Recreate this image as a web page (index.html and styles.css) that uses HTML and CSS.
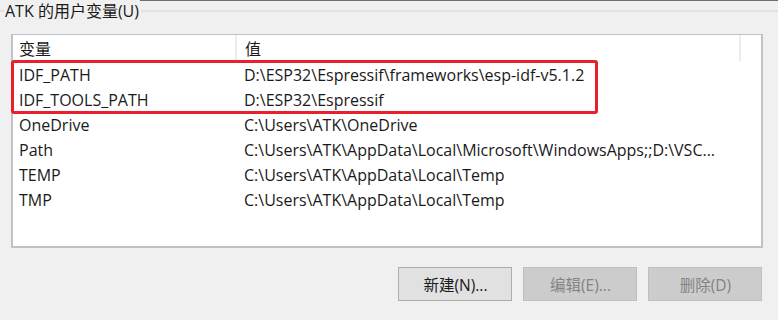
FILE: index.html
```html
<!DOCTYPE html>
<html lang="zh-CN">
<head>
  <meta charset="UTF-8">
  <title>环境变量</title>
  <link rel="stylesheet" href="styles.css">
</head>
<body>
  <div class="topline"></div>

  <div class="group">
    <div class="group-title">
      <span>ATK 的用户变量(U)</span>
    </div>

    <div class="list">
      <div class="head">
        <div class="col name">变量</div>
        <div class="col value">值</div>
        <div class="col rest"></div>
      </div>
      <div class="row"><div class="col name">IDF_PATH</div><div class="col value">D:\ESP32\Espressif\frameworks\esp-idf-v5.1.2</div></div>
      <div class="row"><div class="col name">IDF_TOOLS_PATH</div><div class="col value">D:\ESP32\Espressif</div></div>
      <div class="row"><div class="col name">OneDrive</div><div class="col value">C:\Users\ATK\OneDrive</div></div>
      <div class="row"><div class="col name">Path</div><div class="col value">C:\Users\ATK\AppData\Local\Microsoft\WindowsApps;;D:\VSC...</div></div>
      <div class="row"><div class="col name">TEMP</div><div class="col value">C:\Users\ATK\AppData\Local\Temp</div></div>
      <div class="row"><div class="col name">TMP</div><div class="col value">C:\Users\ATK\AppData\Local\Temp</div></div>

      <!-- 标注框 -->
      <div class="mark"></div>
    </div>

    <div class="buttons">
      <button class="btn">新建(N)...</button>
      <button class="btn" disabled>编辑(E)...</button>
      <button class="btn" disabled>删除(D)</button>
    </div>
  </div>
</body>
</html>
```

FILE: styles.css
```css
body {
  margin: 0;
  background: #f0f0f0;
  font-family: "Open Sans", "Noto Sans CJK SC", sans-serif;
  font-size: 16px;
  color: #1a1a1a;
  width: 778px;
  height: 320px;
  overflow: hidden;
}

.topline {
  height: 1px;
  margin-left: 140px;
  background: #6f6f6f;
}

.group-title {
  display: flex;
  align-items: center;
  height: 20px;
}

.group-title::before,
.group-title::after {
  content: "";
  height: 2px;
  background: #e2e2e2;
}

.group-title::before {
  width: 4px;
}

.group-title::after {
  flex: 1;
}

.group-title span {
  padding: 0 2px 0 1px;
  line-height: 20px;
}

.list {
  position: relative;
  margin: 13px 0 0 11px;
  width: 748px;
  height: 211px;
  background: #fff;
  border: 2px solid #bfc2c6;
  border-top-width: 1px;
}

.head,
.row {
  display: flex;
  height: 25px;
}

.head {
  height: 26px;
}

.col {
  white-space: nowrap;
  overflow: hidden;
  height: 25px;
  padding-top: 4px;
  line-height: 21px;
  box-sizing: border-box;
}

.col.name {
  width: 223px;
  padding-left: 6px;
}

.col.value {
  width: 503px;
  padding-left: 8px;
}

.head .col {
  height: 26px;
  padding-top: 2px;
  line-height: 24px;
  border-right: 2px solid #ececec;
}

.head .col.name {
  width: 224px;
}

.head .col.value {
  width: 504px;
}

.head .col.rest {
  border-right: none;
}

.mark {
  position: absolute;
  left: -2px;
  top: 25px;
  width: 581px;
  height: 48px;
  border: 3px solid #e8202b;
  border-radius: 3px;
}

.buttons {
  display: flex;
  justify-content: flex-end;
  gap: 11px;
  margin: 19px 16px 0 0;
}

.btn {
  width: 114px;
  height: 34px;
  font-family: inherit;
  font-size: 15.5px;
  color: #1a1a1a;
  background: #e1e1e1;
  border: 1px solid #adadad;
  border-radius: 0;
  padding: 0 0 0 1px;
}

.btn:disabled {
  background: #cccccc;
  border-color: #bfbfbf;
  color: #838383;
}
```
